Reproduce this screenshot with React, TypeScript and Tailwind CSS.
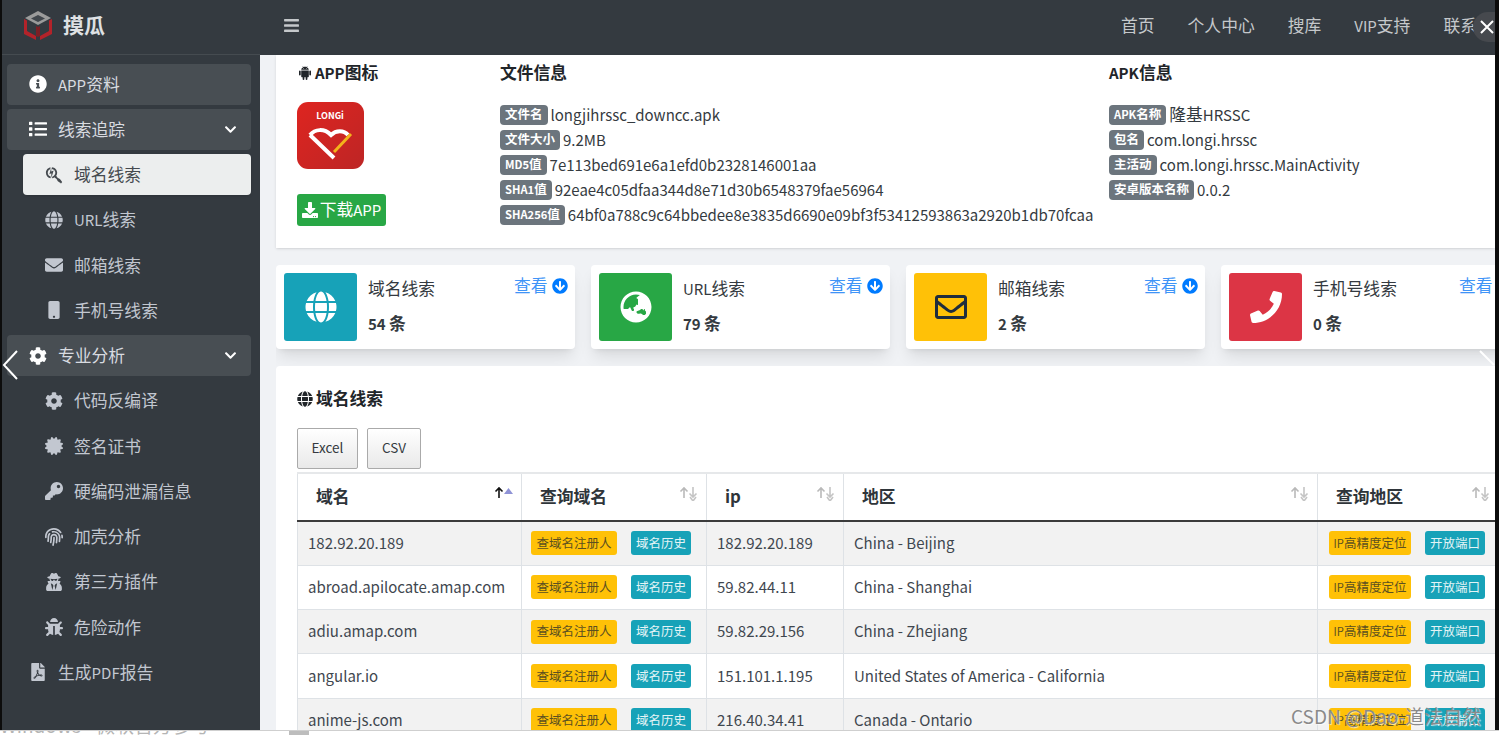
import type { ReactNode } from 'react';
import { AiFillAndroid } from 'react-icons/ai';
import {
    FaArrowCircleDown,
    FaBars,
    FaBug,
    FaCertificate,
    FaChevronDown,
    FaCog,
    FaDownload,
    FaEnvelope,
    FaFilePdf,
    FaFingerprint,
    FaGlobe,
    FaGlobeAsia,
    FaInfoCircle,
    FaKey,
    FaList,
    FaMobile,
    FaPhone,
    FaRegEnvelope,
    FaSearchengin,
    FaUserSecret,
} from 'react-icons/fa';

// latin runs sit a bit smaller than the CJK around them in this page
function Mix({ text }: { text: string }) {
    const parts = text.split(/([\x00-\x7f]+)/).filter(Boolean);
    return (
        <span>
            {parts.map((p, i) =>
                /^[\x00-\x7f]/.test(p) ? (
                    <span key={i} className="text-[0.893em]">
                        {p}
                    </span>
                ) : (
                    <span key={i}>{p}</span>
                )
            )}
        </span>
    );
}

function NavItem({ icon, label, open }: { icon: ReactNode; label: string; open?: boolean }) {
    return (
        <div className="flex items-center h-[41px] mb-[4.250px] ml-[5px] mr-[9px] pl-[21px] pr-[14px] rounded bg-[#484e53] text-[#d8dbe0]">
            <span className="w-[20px] mr-[10px] flex justify-center text-[18px] text-white">{icon}</span>
            <span className="flex-1">
                <Mix text={label} />
            </span>
            {open && <FaChevronDown className="text-[13px] text-white" />}
        </div>
    );
}

function SubItem({ icon, label, active }: { icon: ReactNode; label: string; active?: boolean }) {
    return (
        <div
            className={
                active
                    ? 'flex items-center h-[41px] mb-[4.250px] ml-[21px] mr-[9px] pl-[21px] rounded bg-[#eceeee] text-[#454a4f] shadow-sm'
                    : 'flex items-center h-[41px] mb-[4.250px] ml-[21px] mr-[9px] pl-[21px] rounded text-[#c2c7d0]'
            }
        >
            <span className="w-[20px] mr-[10px] flex justify-center text-[18px]">{icon}</span>
            <Mix text={label} />
        </div>
    );
}

function Sidebar() {
    return (
        <aside className="w-[258px] shrink-0 bg-[#343a40] overflow-hidden">
            <div className="h-[55px] flex items-center pl-[20px] pb-[4px] border-b border-[#454b50] mb-[8.600px]">
                <svg width="32" height="32" viewBox="0 0 32 32" className="mr-[9px]">
                    <path d="M16 2 29 9 16 16 3 9Z" fill="#9b9b9b" />
                    <path d="M16 6 23 9.500 16 13 9 9.500Z" fill="#40464c" />
                    <path d="M2 10 5 11.500V22L14 27V31L2 25Z" fill="#b3232a" />
                    <path d="M30 10 27 11.500V22L18 27V31L30 25Z" fill="#b3232a" />
                    <path d="M14 17 16 18 18 17V27L16 28 14 27Z" fill="#7c1f25" />
                </svg>
                <span className="text-[21px] font-bold text-[#dfe1e4]">摸瓜</span>
            </div>
            <NavItem icon={<FaInfoCircle />} label="APP资料" />
            <NavItem icon={<FaList />} label="线索追踪" open />
            <SubItem icon={<FaSearchengin />} label="域名线索" active />
            <SubItem icon={<FaGlobe />} label="URL线索" />
            <SubItem icon={<FaEnvelope />} label="邮箱线索" />
            <SubItem icon={<FaMobile />} label="手机号线索" />
            <NavItem icon={<FaCog />} label="专业分析" open />
            <SubItem icon={<FaCog />} label="代码反编译" />
            <SubItem icon={<FaCertificate />} label="签名证书" />
            <SubItem icon={<FaKey />} label="硬编码泄漏信息" />
            <SubItem icon={<FaFingerprint />} label="加壳分析" />
            <SubItem icon={<FaUserSecret />} label="第三方插件" />
            <SubItem icon={<FaBug />} label="危险动作" />
            <div className="flex items-center h-[41px] ml-[5px] pl-[21px] text-[#c2c7d0]">
                <span className="w-[20px] mr-[10px] flex justify-center text-[18px]">
                    <FaFilePdf />
                </span>
                <Mix text="生成PDF报告" />
            </div>
        </aside>
    );
}

function Topbar() {
    return (
        <header className="h-[55px] shrink-0 bg-[#343a40] flex items-center pl-[23px] pb-[4px] text-[#c5c8cb] overflow-hidden">
            <FaBars className="text-[17px] shrink-0" />
            <nav className="ml-auto flex gap-[33px] w-[374px] shrink-0 whitespace-nowrap overflow-hidden">
                <span>首页</span>
                <span>个人中心</span>
                <span>搜库</span>
                <Mix text="VIP支持" />
                <span>联系我们</span>
            </nav>
        </header>
    );
}

function Info({ k, v }: { k: string; v: string }) {
    return (
        <div className="h-[25px] flex items-center whitespace-nowrap text-[#343a40]">
            <span className="inline-flex items-center h-[20px] px-[5px] mr-[3px] rounded bg-[#6c757d] text-white text-[12.500px] font-bold">
                <Mix text={k} />
            </span>
            <Mix text={v} />
        </div>
    );
}

function AppLogo() {
    return (
        <svg width="67" height="67" viewBox="0 0 67 67" className="block">
            <defs>
                <linearGradient id="appbg" x1="0" y1="0" x2="1" y2="1">
                    <stop offset="0" stopColor="#de2520" />
                    <stop offset="1" stopColor="#bd2525" />
                </linearGradient>
            </defs>
            <rect width="67" height="67" rx="11" fill="url(#appbg)" />
            <text x="33" y="17" textAnchor="middle" fontSize="9" fontWeight="700" fill="#fff">
                LONGi
            </text>
            <path
                d="M13 33 37 56M13 33C18 27 27 26 34 33C39 28 47 28 51 33"
                fill="none"
                stroke="#fff"
                strokeWidth="4"
            />
            <path d="M37 50 54 32" fill="none" stroke="#f3b31b" strokeWidth="3" />
        </svg>
    );
}

function FileCard() {
    return (
        <section className="h-[193px] shrink-0 ml-[16px] bg-white shadow flex pl-[21px] pt-[7px]">
            <div className="w-[203px] shrink-0">
                <h3 className="h-[22px] flex items-center font-bold text-[#212529]">
                    <AiFillAndroid className="mr-[2px] text-[16px]" />
                    <Mix text="APP图标" />
                </h3>
                <div className="mt-[18px]">
                    <AppLogo />
                </div>
                <div className="mt-[25px] w-[89px] h-[32px] rounded-[3px] bg-[#28a745] text-white flex items-center justify-center">
                    <FaDownload className="text-[16px] mr-[2px]" />
                    <Mix text="下载APP" />
                </div>
            </div>
            <div className="w-[609px] shrink-0">
                <h3 className="h-[22px] flex items-center font-bold text-[#212529]">文件信息</h3>
                <div className="mt-[18px]">
                    <Info k="文件名" v="longjihrssc_downcc.apk" />
                    <Info k="文件大小" v="9.2MB" />
                    <Info k="MD5值" v="7e113bed691e6a1efd0b2328146001aa" />
                    <Info k="SHA1值" v="92eae4c05dfaa344d8e71d30b6548379fae56964" />
                    <Info k="SHA256值" v="64bf0a788c9c64bbedee8e3835d6690e09bf3f53412593863a2920b1db70fcaa" />
                </div>
            </div>
            <div>
                <h3 className="h-[22px] flex items-center font-bold text-[#212529]">
                    <Mix text="APK信息" />
                </h3>
                <div className="mt-[18px]">
                    <Info k="APK名称" v="隆基HRSSC" />
                    <Info k="包名" v="com.longi.hrssc" />
                    <Info k="主活动" v="com.longi.hrssc.MainActivity" />
                    <Info k="安卓版本名称" v="0.0.2" />
                </div>
            </div>
        </section>
    );
}

function StatCard({ icon, color, label, count }: { icon: ReactNode; color: string; label: string; count: string }) {
    return (
        <div className="relative w-[299px] h-[84px] shrink-0 rounded bg-white shadow-lg p-[8px] flex">
            <div className={`w-[73px] h-[68px] rounded-[3px] flex items-center justify-center text-[32px] ${color}`}>
                {icon}
            </div>
            <div className="ml-[11px] text-[#343a40]">
                <div className="h-[18px] mt-[6px] leading-[18px]">
                    <Mix text={label} />
                </div>
                <div className="mt-[17px] h-[18px] leading-[18px] font-bold">
                    <Mix text={count} />
                </div>
            </div>
            <div className="absolute left-[238px] top-[8px] h-[25px] flex items-center whitespace-nowrap text-[#3f94f7]">
                查看
                <FaArrowCircleDown className="ml-[4px] text-[#007bff] text-[16px]" />
            </div>
        </div>
    );
}

function SortIcon({ active }: { active?: boolean }) {
    return (
        <svg width="22" height="16" viewBox="0 0 22 16" className="absolute right-[6px] top-[1px]">
            <path
                d="M6 13V3M2.500 6.500 6 3 9.500 6.500"
                fill="none"
                stroke={active ? '#111' : '#b9b9b9'}
                strokeWidth="1.600"
            />
            {active ? (
                <path d="M11 9 15.500 3 20 9Z" fill="#8f93d6" />
            ) : (
                <path d="M15 2V12M11.500 8.500 15 12 18.500 8.500M12 12 15 16 18 12" fill="none" stroke="#c4c4c4" strokeWidth="1.600" />
            )}
        </svg>
    );
}

function Tag({ color, children }: { color: string; children: ReactNode }) {
    return (
        <span className={`inline-flex items-center justify-center h-[24px] rounded-[3px] text-[12.500px] whitespace-nowrap ${color}`}>
            {children}
        </span>
    );
}

const rows = [
    ['182.92.20.189', '182.92.20.189', 'China - Beijing'],
    ['abroad.apilocate.amap.com', '59.82.44.11', 'China - Shanghai'],
    ['adiu.amap.com', '59.82.29.156', 'China - Zhejiang'],
    ['angular.io', '151.101.1.195', 'United States of America - California'],
    ['anime-js.com', '216.40.34.41', 'Canada - Ontario'],
];

const headers = ['域名', '查询域名', 'ip', '地区', '查询地区'];

function DomainTable() {
    return (
        <table className="table-fixed border-collapse w-[1201px] border-t-2 border-[#e6e8ea] text-[#3f474f]">
            <colgroup>
                <col className="w-[224px]" />
                <col className="w-[185px]" />
                <col className="w-[137px]" />
                <col className="w-[474px]" />
                <col className="w-[181px]" />
            </colgroup>
            <thead>
                <tr className="h-[48px] border-b-2 border-[#3b3b3b]">
                    {headers.map((h, i) => (
                        <th key={h} className="border-x border-[#dee2e6] text-left font-bold pl-[18px] text-[#2f353a]">
                            <div className="relative">
                                {h}
                                <SortIcon active={i === 0} />
                            </div>
                        </th>
                    ))}
                </tr>
            </thead>
            <tbody>
                {rows.map((r, i) => (
                    <tr key={r[0]} className={i % 2 === 0 ? 'h-[44.300px] bg-[#f2f2f2] border-b border-[#dee2e6]' : 'h-[44.300px] border-b border-[#dee2e6]'}>
                        <td className="border-x border-[#dee2e6] pl-[10px] text-[15px]">{r[0]}</td>
                        <td className="border-x border-[#dee2e6] pl-[9px]">
                            <div className="flex gap-[14px]">
                                <Tag color="w-[86px] bg-[#ffc107] text-[#5c5020]">查域名注册人</Tag>
                                <Tag color="w-[60px] bg-[#17a2b8] text-[#e4f4f6]">域名历史</Tag>
                            </div>
                        </td>
                        <td className="border-x border-[#dee2e6] pl-[10px] text-[15px]">{r[1]}</td>
                        <td className="border-x border-[#dee2e6] pl-[10px] text-[15px]">{r[2]}</td>
                        <td className="border-x border-[#dee2e6] pl-[11px]">
                            <div className="flex gap-[14px]">
                                <Tag color="w-[82px] bg-[#ffc107] text-[#5c5020]">
                                    <Mix text="IP高精度定位" />
                                </Tag>
                                <Tag color="w-[60px] bg-[#17a2b8] text-[#e4f4f6]">开放端口</Tag>
                            </div>
                        </td>
                    </tr>
                ))}
            </tbody>
        </table>
    );
}

function ExportButton({ children, width }: { children: ReactNode; width: string }) {
    return (
        <div className={`h-[41px] pb-[2px] flex items-center justify-center rounded-[2px] border border-[#aaa] bg-gradient-to-b from-white to-[#e9e9e9] text-[13.500px] text-[#343a40] ${width}`}>
            {children}
        </div>
    );
}

export default function App() {
    return (
        <div className="relative w-[1499px] h-[735px] overflow-hidden bg-white text-[16.800px] font-['Noto_Sans_CJK_SC',sans-serif]">
            <div className="flex h-[730px] bg-[#0c0c0c]">
                <div className="w-[2px] shrink-0" />
                <Sidebar />
                <main className="w-[1235px] shrink-0 flex flex-col bg-[#f0f2f5] overflow-hidden">
                    <Topbar />
                    <FileCard />
                    <div className="shrink-0 flex gap-[16px] ml-[16px] mt-[17px] overflow-hidden pb-[17px]">
                        <StatCard icon={<FaGlobe className="text-white" />} color="bg-[#17a2b8]" label="域名线索" count="54 条" />
                        <StatCard icon={<FaGlobeAsia className="text-white" />} color="bg-[#28a745]" label="URL线索" count="79 条" />
                        <StatCard icon={<FaRegEnvelope className="text-[#1f2d3d]" />} color="bg-[#ffc107]" label="邮箱线索" count="2 条" />
                        <StatCard icon={<FaPhone className="text-white" />} color="bg-[#dc3545]" label="手机号线索" count="0 条" />
                    </div>
                    <section className="flex-1 ml-[16px] rounded-tl bg-white pl-[21px] pt-[22px] overflow-hidden">
                        <h3 className="h-[22px] flex items-center font-bold text-[#212529]">
                            <FaGlobe className="mr-[3px] text-[16px]" />
                            域名线索
                        </h3>
                        <div className="flex gap-[9px] mt-[18px] mb-[3px]">
                            <ExportButton width="w-[61px]">Excel</ExportButton>
                            <ExportButton width="w-[54px]">CSV</ExportButton>
                        </div>
                        <DomainTable />
                    </section>
                </main>
            </div>
            <div className="relative h-[5px] overflow-hidden border-t border-[#cfcfcf] text-[#b5b5b5]">
                <div className="-mt-[20px] text-[19px] whitespace-nowrap">Windows - 微软官方参考</div>
                <div className="absolute left-[289px] top-0 w-[20px] h-[5px] bg-[#bdbdbd]" />
            </div>

            <svg width="16" height="30" viewBox="0 0 16 30" className="absolute left-[2px] top-[350px]">
                <path d="M15 1 2 15 15 29" fill="none" stroke="#fff" strokeWidth="2" />
            </svg>
            <svg width="16" height="16" viewBox="0 0 16 16" className="absolute left-[1479px] top-[350px]">
                <path d="M1 1 15 15" fill="none" stroke="#fff" strokeWidth="2" />
            </svg>
            <div className="absolute left-[1473px] top-[12px] w-[22px] h-[30px] rounded-l-full bg-[#46494e] flex items-center justify-end pr-[1px]">
                <svg width="14" height="14" viewBox="0 0 14 14">
                    <path d="M1 1 13 13M13 1 1 13" stroke="#fff" strokeWidth="2" />
                </svg>
            </div>
            <div className="absolute left-[1291px] top-[702px] text-[19px] text-[#8a8a8a] whitespace-nowrap [text-shadow:1px_1px_1px_rgba(255,255,255,0.7)]">
                CSDN @Dao-道法自然
            </div>
        </div>
    );
}
